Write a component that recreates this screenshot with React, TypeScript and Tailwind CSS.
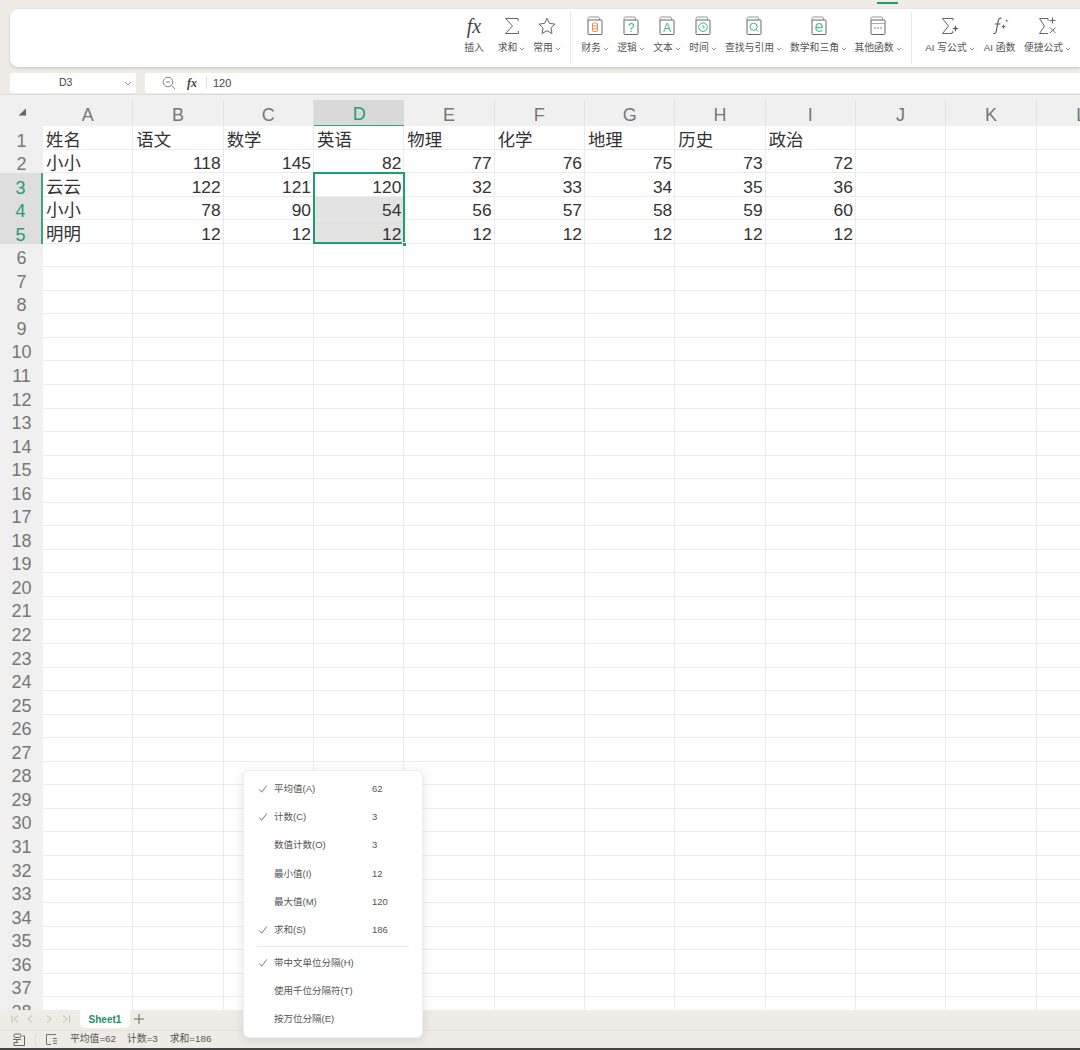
import React from "react";

const font = "font-['Liberation_Sans','Noto_Sans_CJK_SC',sans-serif]";

const Chev = () => (
  <svg width="6" height="4" viewBox="0 0 6 4" className="ml-[2px] mt-[1px] shrink-0">
    <path d="M0.8 0.8 L3 3 L5.2 0.8" fill="none" stroke="#777" strokeWidth="0.8" />
  </svg>
);

const Frame = ({ children }: { children?: React.ReactNode }) => (
  <svg width="18" height="20" viewBox="0 0 18 20">
    <path d="M2 5 V2.4 Q2 1 3.4 1 H12.4 Q13.4 1 13.4 2.2 V4" fill="none" stroke="#8a8a8a" strokeWidth="0.9" />
    <rect x="2" y="4" width="14" height="14.5" rx="0.8" fill="#fff" stroke="#666" strokeWidth="1" />
    {children}
  </svg>
);

const Txt = ({ c, children, size = 12 }: { c: string; children: React.ReactNode; size?: number }) => (
  <text x="9" y="15.8" textAnchor="middle" fontSize={size} fill={c} fontFamily="Liberation Sans">
    {children}
  </text>
);

const Sigma = ({ w = 20 }: { w?: number }) => (
  <svg width={w} height="20" viewBox="0 0 20 20">
    <path d="M3.5 2.5 H16 V5 M3.5 2.5 L10.5 10 L3.5 17.5 H16.5 V15" fill="none" stroke="#666" strokeWidth="1" />
  </svg>
);

const icons: Record<string, React.ReactNode> = {
  fx: <span className="font-['Liberation_Serif',serif] italic text-[20px] leading-[20px] text-[#444]">fx</span>,
  sigma: <Sigma />,
  star: (
    <svg width="20" height="20" viewBox="0 0 20 20">
      <path d="M10 2.2 L12.4 7.4 L18 8.1 L13.9 11.9 L15 17.5 L10 14.7 L5 17.5 L6.1 11.9 L2 8.1 L7.6 7.4 Z" fill="none" stroke="#666" strokeWidth="1" strokeLinejoin="round" />
    </svg>
  ),
  fin: (
    <Frame>
      <rect x="6.5" y="7" width="5" height="8.5" rx="0.8" fill="none" stroke="#e98e5a" strokeWidth="1" />
      <path d="M6.5 10 H11.5 M6.5 12.8 H11.5" stroke="#e98e5a" strokeWidth="1" />
    </Frame>
  ),
  logic: <Frame><Txt c="#3fb28f">?</Txt></Frame>,
  text: <Frame><Txt c="#3fb28f">A</Txt></Frame>,
  time: (
    <Frame>
      <circle cx="9" cy="11.2" r="4.3" fill="none" stroke="#3fb28f" strokeWidth="1" />
      <path d="M9 8.8 V11.4 H11" fill="none" stroke="#3fb28f" strokeWidth="0.9" />
    </Frame>
  ),
  find: (
    <Frame>
      <circle cx="8.6" cy="10.8" r="3.6" fill="none" stroke="#3fb28f" strokeWidth="1" />
      <path d="M11.2 13.4 L13.4 15.6" stroke="#3fb28f" strokeWidth="1" />
    </Frame>
  ),
  math: <Frame><Txt c="#58bd9e" size={16}>e</Txt></Frame>,
  other: (
    <Frame>
      <path d="M2 7.5 H16" stroke="#999" strokeWidth="0.8" />
      <circle cx="6" cy="12" r="0.8" fill="#777" />
      <circle cx="9" cy="12" r="0.8" fill="#777" />
      <circle cx="12" cy="12" r="0.8" fill="#777" />
    </Frame>
  ),
  aisum: (
    <svg width="20" height="20" viewBox="0 0 20 20">
      <path d="M2.5 2.5 H13 V4.5 M2.5 2.5 L8.5 10 L2.5 17.5 H12" fill="none" stroke="#666" strokeWidth="1" />
      <path d="M15.5 9 L16.3 11.7 L19 12.5 L16.3 13.3 L15.5 16 L14.7 13.3 L12 12.5 L14.7 11.7 Z" fill="#555" />
      <path d="M12.5 14.5 L12.9 15.8 L14.2 16.2 L12.9 16.6 L12.5 17.9 L12.1 16.6 L10.8 16.2 L12.1 15.8 Z" fill="#555" />
    </svg>
  ),
  aif: (
    <svg width="20" height="20" viewBox="0 0 20 20">
      <path d="M11.5 2.2 Q8.8 1.6 8.2 5 L6.3 15 Q5.8 18 3.2 17.5 M4.8 8 H10.5" fill="none" stroke="#555" strokeWidth="1.1" />
      <path d="M13.5 8 L14.1 10 L16 10.6 L14.1 11.2 L13.5 13.2 L12.9 11.2 L11 10.6 L12.9 10 Z" fill="#555" />
      <path d="M16.8 3 L17.2 4.4 L18.6 4.8 L17.2 5.2 L16.8 6.6 L16.4 5.2 L15 4.8 L16.4 4.4 Z" fill="#555" />
    </svg>
  ),
  quick: (
    <svg width="20" height="20" viewBox="0 0 20 20">
      <path d="M1.5 2.5 H10 V4.5 M1.5 2.5 L6.5 10 L1.5 17.5 H10" fill="none" stroke="#666" strokeWidth="1" />
      <path d="M14.5 1.5 V7.5 M11.5 4.5 H17.5 M12 11.5 L17.5 17 M17.5 11.5 L12 17" stroke="#666" strokeWidth="1" />
    </svg>
  ),
};

const ribbonA = [
  { k: "fx", l: "插入", w: "w-[20px]", c: false },
  { k: "sigma", l: "求和", w: "w-[27px] ml-[6px]", c: true },
  { k: "star", l: "常用", w: "w-[28px]", c: true },
];
const ribbonB = [
  { k: "fin", l: "财务", w: "w-[28px]", c: true },
  { k: "logic", l: "逻辑", w: "w-[28px]", c: true },
  { k: "text", l: "文本", w: "w-[28px]", c: true },
  { k: "time", l: "时间", w: "w-[28px]", c: true },
  { k: "find", l: "查找与引用", w: "w-[57px]", c: true },
  { k: "math", l: "数学和三角", w: "w-[57px]", c: true },
  { k: "other", l: "其他函数", w: "w-[46px]", c: true },
];
const ribbonC = [
  { k: "aisum", l: "AI 写公式", w: "w-[50px]", c: true },
  { k: "aif", l: "AI 函数", w: "w-[33px]", c: false },
  { k: "quick", l: "便捷公式", w: "w-[47px]", c: true },
];

const RibbonItem = ({ item }: { item: { k: string; l: string; w: string; c: boolean } }) => (
  <div className={`${item.w} flex flex-col items-center shrink-0`}>
    <div className="h-[22px] flex items-center justify-center">{icons[item.k]}</div>
    <div className="mt-[5px] h-[12px] flex items-center justify-center whitespace-nowrap text-[9.8px] leading-[12px] text-[#555]">
      {item.l}
      {item.c && <Chev />}
    </div>
  </div>
);

const Sep = () => <div className="w-px h-[52px] bg-[#e8e8e8] mx-[10px] shrink-0" />;

const columns = ["A", "B", "C", "D", "E", "F", "G", "H", "I", "J", "K", "L"];
const data: (string | number)[][] = [
  ["姓名", "语文", "数学", "英语", "物理", "化学", "地理", "历史", "政治"],
  ["小小", 118, 145, 82, 77, 76, 75, 73, 72],
  ["云云", 122, 121, 120, 32, 33, 34, 35, 36],
  ["小小", 78, 90, 54, 56, 57, 58, 59, 60],
  ["明明", 12, 12, 12, 12, 12, 12, 12, 12],
];
const rows = Array.from({ length: 38 }, (_, i) => i + 1);

const Grid = () => (
  <div className="relative h-[916px] overflow-hidden bg-white">
    <div className="h-[6px] bg-[#f0f0f0] border-t border-[#dcdcdc]" />
    <div className="grid grid-cols-[43px_repeat(12,90.33px)] grid-rows-[26px_repeat(38,23.55px)] w-[1200px]">
      <div className="bg-[#f0f0f0] flex items-center justify-center">
        <svg width="10" height="10" viewBox="0 0 10 10" className="mt-[-2px]">
          <path d="M9 1.5 V8.5 H1.5 Z" fill="#666" />
        </svg>
      </div>
      {columns.map((c) => (
        <div
          key={c}
          className={
            c === "D"
              ? "bg-[#d9d9d9] border-b border-[#2aa57c] text-[#2a9a72] text-[18px] flex items-center justify-center pt-[4px]"
              : "bg-[#f0f0f0] border-r border-[#e2e2e2] text-[#777] text-[18px] flex items-center justify-center pt-[4px]"
          }
        >
          {c}
        </div>
      ))}
      {rows.map((r) => (
        <React.Fragment key={r}>
          <div
            className={
              r >= 3 && r <= 5
                ? "bg-[#dedede] border-r-2 border-[#3aa682] text-[#2a9a72] text-[18px] flex items-end justify-center leading-[24px]"
                : "bg-[#f0f0f0] text-[#777] text-[18px] flex items-end justify-center leading-[24px]"
            }
          >
            <span className="translate-y-[3px]">{r}</span>
          </div>
          {columns.map((c, ci) => {
            const v = data[r - 1]?.[ci];
            const isNum = typeof v === "number";
            const shaded = c === "D" && (r === 4 || r === 5);
            return (
              <div
                key={c}
                className={`${shaded ? "bg-[#e3e3e3]" : "bg-white"} border-r border-b border-[#ebebeb] flex items-end whitespace-nowrap text-[17.4px] leading-[24px] text-[#333] ${
                  isNum ? "justify-end pr-[2px]" : "justify-start pl-[3px]"
                }`}
              >
                {v !== undefined && <span className="translate-y-[3px]">{v}</span>}
              </div>
            );
          })}
        </React.Fragment>
      ))}
    </div>
    <div className="absolute left-[313px] top-[78px] w-[92px] h-[72px] border-2 border-[#1f9d6f]" />
    <div className="absolute left-[402px] top-[148px] w-[5px] h-[5px] bg-[#1f9d6f] border border-white" />
  </div>
);

const Check = () => (
  <svg width="10" height="10" viewBox="0 0 10 10">
    <path d="M1.2 5.4 L3.7 8.2 L8.8 1.4" fill="none" stroke="#666" strokeWidth="0.9" />
  </svg>
);

const menuA: [boolean, string, string][] = [
  [true, "平均值(A)", "62"],
  [true, "计数(C)", "3"],
  [false, "数值计数(O)", "3"],
  [false, "最小值(I)", "12"],
  [false, "最大值(M)", "120"],
  [true, "求和(S)", "186"],
];
const menuB: [boolean, string][] = [
  [true, "带中文单位分隔(H)"],
  [false, "使用千位分隔符(T)"],
  [false, "按万位分隔(E)"],
];

const MenuRow = ({ on, label, value }: { on: boolean; label: string; value?: string }) => (
  <div className="h-[28.2px] flex items-center">
    <div className="w-[30px] pl-[14px] flex items-center">{on && <Check />}</div>
    <div className="w-[98px] whitespace-nowrap">{label}</div>
    {value && <div>{value}</div>}
  </div>
);

const Menu = () => (
  <div className="absolute left-[243px] top-[770px] w-[180px] h-[268px] bg-white rounded-[6px] border border-[#eeeeee] shadow-[0_2px_10px_rgba(0,0,0,0.12)] pt-[4px] text-[9.5px] text-[#555]">
    {menuA.map(([on, l, v]) => (
      <MenuRow key={l} on={on} label={l} value={v} />
    ))}
    <div className="h-px bg-[#e8e8e8] mx-[13px] mt-[2px] mb-[2px]" />
    {menuB.map(([on, l]) => (
      <MenuRow key={l} on={on} label={l} />
    ))}
  </div>
);

export default function App() {
  return (
    <div className={`relative w-[1080px] h-[1050px] overflow-hidden bg-[#efece6] flex flex-col ${font}`}>
      <div className="h-[9px] relative shrink-0">
        <div className="absolute left-[877px] top-[2px] w-[21px] h-[1.5px] bg-[#1f9d6f]" />
      </div>
      <div className="h-[58px] ml-[10px] shrink-0 bg-white rounded-l-[8px] shadow-[0_1px_3px_rgba(0,0,0,0.18)] flex items-start justify-end pt-[6px] pr-[9px]">
        <div className="flex gap-[8px] translate-x-[1px]">
          {ribbonA.map((i) => (
            <RibbonItem key={i.k} item={i} />
          ))}
        </div>
        <div className="-mt-[3px]"><Sep /></div>
        <div className="flex gap-[8px]">
          {ribbonB.map((i) => (
            <RibbonItem key={i.k} item={i} />
          ))}
        </div>
        <div className="-mt-[3px]"><Sep /></div>
        <div className="flex gap-[8px] ml-[3px]">
          {ribbonC.map((i) => (
            <RibbonItem key={i.k} item={i} />
          ))}
        </div>
      </div>
      <div className="h-[20px] mt-[6px] shrink-0 flex text-[10.5px] text-[#444]">
        <div className="ml-[10px] w-[126px] bg-white rounded-[3px] flex items-center justify-between">
          <span className="ml-[49px]">D3</span>
          <svg width="8" height="5" viewBox="0 0 8 5" className="mr-[4px]">
            <path d="M1 1 L4 4 L7 1" fill="none" stroke="#888" strokeWidth="0.9" />
          </svg>
        </div>
        <div className="ml-[9px] flex-1 bg-white rounded-l-[3px] flex items-center">
          <svg width="14" height="14" viewBox="0 0 14 14" className="ml-[17px]">
            <circle cx="6" cy="6" r="4.8" fill="none" stroke="#777" strokeWidth="0.9" />
            <path d="M3.8 6 H8.2 M9.5 9.5 L13 13" stroke="#777" strokeWidth="0.9" />
          </svg>
          <span className="ml-[11px] font-['Liberation_Serif',serif] italic font-bold text-[12px] text-[#444]">fx</span>
          <div className="w-px h-[12px] bg-[#ddd] ml-[9px]" />
          <span className="ml-[6px] text-[11px]">120</span>
        </div>
      </div>
      <div className="h-px shrink-0" />
      <Grid />
      <div className="h-[20px] shrink-0 flex items-start text-[#aaa]">
        <div className="w-[80px] h-[18px] flex items-center pl-[11px] text-[#b0b0b0]">
          <svg width="66" height="10" viewBox="0 0 66 10">
            <path d="M1 1.5 V8.5 M7 1.5 L3 5 L7 8.5 M21 1.5 L17 5 L21 8.5 M36 1.5 L40 5 L36 8.5 M52 1.5 L56 5 L52 8.5 M58.5 1.5 V8.5" fill="none" stroke="#b4b4b4" strokeWidth="0.9" />
          </svg>
        </div>
        <div className="w-[50px] h-[18px] bg-white rounded-b-[5px] flex items-center justify-center text-[10px] font-bold text-[#1f8f68]">
          Sheet1
        </div>
        <svg width="12" height="12" viewBox="0 0 12 12" className="ml-[3px] mt-[3px]">
          <path d="M6 1 V11 M1 6 H11" stroke="#666" strokeWidth="1" />
        </svg>
      </div>
      <div className="flex-1 border-t border-[#e4e1da] flex items-center text-[9.8px] text-[#555]">
        <svg width="14" height="14" viewBox="0 0 14 14" className="ml-[12px]">
          <rect x="2" y="1" width="7" height="3.5" rx="1.2" fill="none" stroke="#555" strokeWidth="0.9" />
          <path d="M1 6.5 H9 M5 6.5 V9 M10.5 3 H12.5 V12.5 H2 V9.5 H6" fill="none" stroke="#555" strokeWidth="0.9" />
        </svg>
        <div className="w-px h-[12px] bg-[#ddd] ml-[9px]" />
        <svg width="13" height="13" viewBox="0 0 13 13" className="ml-[9px]">
          <path d="M11 1.5 H1.5 V11.5 H6 M8 5.5 H12 M8 8 H12 M8 10.5 H12" fill="none" stroke="#666" strokeWidth="0.9" />
        </svg>
        <span className="ml-[12px]">平均值=62</span>
        <span className="ml-[11px]">计数=3</span>
        <span className="ml-[12px]">求和=186</span>
      </div>
      <div className="h-[2px] shrink-0 bg-[#444]" />
      <Menu />
    </div>
  );
}
